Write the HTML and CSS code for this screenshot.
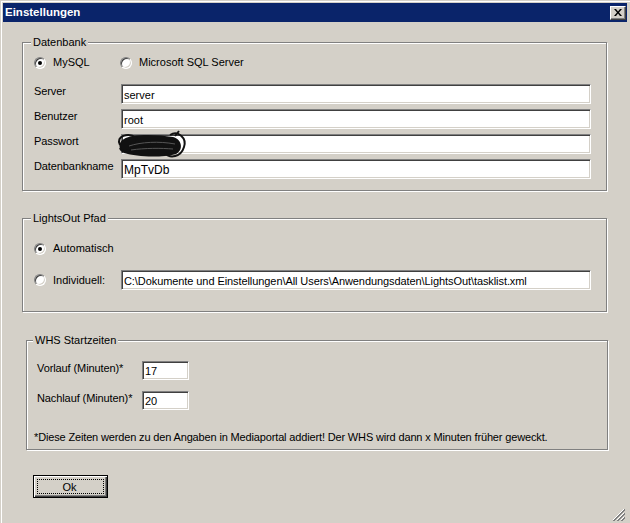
FILE: index.html
```html
<!DOCTYPE html>
<html>
<head>
<meta charset="utf-8">
<link rel="stylesheet" href="styles.css">
</head>
<body>
<div class="window">
  <div class="titlebar">
    <span class="titlebar__text">Einstellungen</span>
    <span class="titlebar__close">
      <svg width="8" height="7" viewBox="0 0 8 7"><path d="M0 0h2l2 2.5L6 0h2L5 3.5 8 7H6L4 4.5 2 7H0l3-3.5z" fill="#000"/></svg>
    </span>
  </div>

  <div class="content">
    <div class="group group--db">
      <span class="group__title">Datenbank</span>
      <div class="radio-row">
        <label class="radio radio--wide"><span class="radio__box radio__box--checked"></span>MySQL</label>
        <label class="radio"><span class="radio__box"></span>Microsoft SQL Server</label>
      </div>
      <div class="form">
        <span class="form__label">Server</span>
        <input class="field" type="text" value="server">
        <span class="form__label">Benutzer</span>
        <input class="field" type="text" value="root">
        <span class="form__label">Passwort</span>
        <div class="field-wrap">
          <input class="field" type="text" value="">
          <svg class="scribble" width="74" height="30" viewBox="0 0 74 30">
            <path d="M9 9C16 4 40 4 58 7C67 9 69 20 61 24C46 28 22 27 9 23C3 20 3 12 9 9Z" fill="#111"/>
            <path d="M5 15C0 6 14 2 21 8C27 15 8 27 5 18" fill="none" stroke="#111" stroke-width="2"/>
            <path d="M55 5C63 0 72 8 69 17C66 27 55 29 50 23" fill="none" stroke="#111" stroke-width="2"/>
            <path d="M14 16C26 12 44 11 60 14M16 20C30 18 46 18 58 19" fill="none" stroke="#555" stroke-width="1"/>
            <path d="M60 6L64 1" fill="none" stroke="#111" stroke-width="2"/>
          </svg>
        </div>
        <span class="form__label">Datenbankname</span>
        <input class="field field--big" type="text" value="MpTvDb">
      </div>
    </div>

    <div class="group group--path">
      <span class="group__title">LightsOut Pfad</span>
      <div class="radio-row radio-row--auto">
        <label class="radio"><span class="radio__box radio__box--checked"></span>Automatisch</label>
      </div>
      <div class="form form--path">
        <label class="radio"><span class="radio__box"></span>Individuell:</label>
        <input class="field field--path" type="text" value="C:\Dokumente und Einstellungen\All Users\Anwendungsdaten\LightsOut\tasklist.xml">
      </div>
    </div>

    <div class="group group--whs">
      <span class="group__title">WHS Startzeiten</span>
      <div class="form form--whs">
        <span class="form__label">Vorlauf (Minuten)*</span>
        <input class="field field--short" type="text" value="17">
        <span class="form__label">Nachlauf (Minuten)*</span>
        <input class="field field--short" type="text" value="20">
      </div>
      <p class="note">*Diese Zeiten werden zu den Angaben in Mediaportal addiert! Der WHS wird dann x Minuten früher geweckt.</p>
    </div>

    <button class="button" type="button"><span class="button__focus">Ok</span></button>
  </div>

  <svg class="grip" width="13" height="13" viewBox="0 0 13 13">
    <path d="M12 1L1 12M12 5L5 12M12 9L9 12" stroke="#fff" stroke-width="1"/>
    <path d="M13 1L1 13M13 2L2 13M13 5L5 13M13 6L6 13M13 9L9 13M13 10L10 13" stroke="#808080" stroke-width="1"/>
  </svg>
</div>
</body>
</html>
```

FILE: styles.css
```css
* {
  box-sizing: border-box;
  margin: 0;
  padding: 0;
}

html, body {
  width: 630px;
  height: 523px;
  overflow: hidden;
}

body {
  background: #d4d0c8;
  font-family: "Liberation Sans", Arial, sans-serif;
  font-size: 11px;
  line-height: 13px;
  color: #000;
}

.window {
  width: 630px;
  height: 523px;
  display: flex;
  flex-direction: column;
  padding: 3px 3px 0 3px;
  box-shadow: inset 1px 1px 0 #d4d0c8, inset 2px 2px 0 #fff;
}

/* title bar */
.titlebar {
  height: 19px;
  flex: none;
  background: #0a246a;
  display: flex;
  align-items: center;
  justify-content: space-between;
  padding: 0 1px 0 2px;
}

.titlebar__text {
  color: #fff;
  font-weight: bold;
  font-size: 11.5px;
}

.titlebar__close {
  width: 16px;
  height: 14px;
  display: flex;
  align-items: center;
  justify-content: center;
  background: #d4d0c8;
  border: 1px solid;
  border-color: #fff #404040 #404040 #fff;
  box-shadow: inset -1px -1px 0 #808080;
  padding-right: 1px;
}

.content {
  flex: 1;
  padding: 20px 0 0 19px;
}

/* group boxes */
.group {
  border: 1px solid #808080;
  box-shadow: 1px 1px 0 #fff, inset 1px 1px 0 #fff;
}

.group__title {
  display: block;
  width: fit-content;
  margin: -7px 0 0 -3px;
  padding: 0 2px;
  background: #d4d0c8;
}

.group--db {
  width: 585px;
  height: 149px;
  padding: 0 15px 0 11px;
}

.group--path {
  width: 585px;
  height: 94px;
  margin-top: 27px;
  padding: 0 15px 0 11px;
}

.group--whs {
  width: 582px;
  height: 110px;
  margin: 28px 0 0 4px;
  padding: 0 10px 0 7px;
}

.group--whs .group__title {
  margin-left: -1px;
}

/* radio buttons */
.radio-row {
  display: flex;
  align-items: center;
  height: 13px;
  margin-top: 7px;
}

.radio-row--auto {
  margin-top: 17px;
}

.radio {
  display: flex;
  align-items: center;
  gap: 7px;
}

.radio--wide {
  width: 86px;
}

.radio__box {
  width: 12px;
  height: 12px;
  flex: none;
  border-radius: 50%;
  background: #fff;
  border: 1px solid;
  border-color: #808080 #fff #fff #808080;
  box-shadow: inset 1px 1px 0 #404040, inset -1px -1px 0 #d4d0c8;
  display: flex;
  align-items: center;
  justify-content: center;
}

.radio__box--checked::after {
  content: "";
  width: 4px;
  height: 4px;
  border-radius: 50%;
  background: #000;
}

/* label + field rows */
.form {
  display: grid;
  grid-template-columns: 87px 470px;
  row-gap: 5px;
  margin-top: 15px;
}

.form__label {
  padding-top: 1px;
  letter-spacing: -0.1px;
}

.form--path {
  margin-top: 15px;
  align-items: center;
}

.form--whs {
  grid-template-columns: 105px 47px;
  row-gap: 11px;
  margin-top: 14px;
  padding-left: 3px;
}

.field {
  display: block;
  width: 100%;
  height: 20px;
  border: 1px solid;
  border-color: #808080 #fff #fff #808080;
  box-shadow: inset 1px 1px 0 #404040, inset -1px -1px 0 #d4d0c8;
  background: #fff;
  font-family: "Liberation Sans", Arial, sans-serif;
  font-size: 11px;
  color: #000;
  padding: 1px 2px 0;
  outline: none;
}

.field--big {
  font-size: 12px;
}

.field--path {
  letter-spacing: -0.08px;
}

.field--short {
  height: 19px;
}

.field-wrap {
  position: relative;
}

.scribble {
  position: absolute;
  left: -6px;
  top: -4px;
}

.note {
  margin-top: 21px;
  letter-spacing: -0.15px;
}

/* ok button */
.button {
  display: block;
  width: 75px;
  height: 23px;
  margin: 25px 0 0 11px;
  background: #d4d0c8;
  border: 1px solid #000;
  box-shadow: inset 1px 1px 0 #fff, inset -1px -1px 0 #404040, inset -2px -2px 0 #808080;
  font-family: "Liberation Sans", Arial, sans-serif;
  font-size: 11px;
  color: #000;
  padding: 3px;
}

.button__focus {
  display: flex;
  align-items: center;
  justify-content: center;
  height: 100%;
  border: 1px dotted #000;
  padding-right: 2px;
}

.grip {
  align-self: flex-end;
  margin: 0 2px 2px 0;
}
```
